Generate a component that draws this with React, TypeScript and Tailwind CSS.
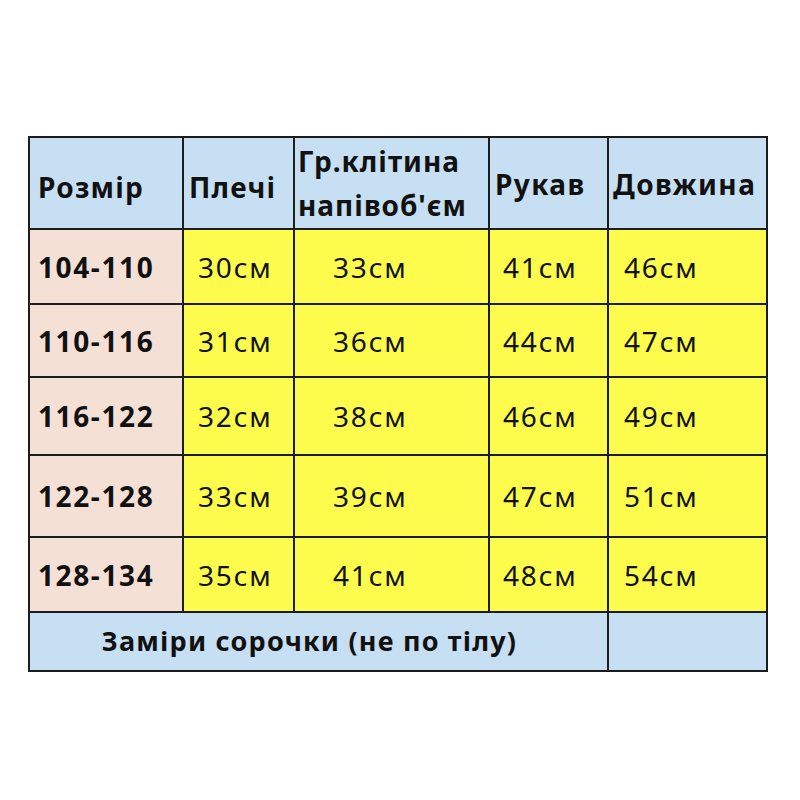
const rows = [
  { size: '104-110', h: 'h-[73px]', vals: ['30см', '33см', '41см', '46см'] },
  { size: '110-116', h: 'h-[71px]', vals: ['31см', '36см', '44см', '47см'] },
  { size: '116-122', h: 'h-[76px]', vals: ['32см', '38см', '46см', '49см'] },
  { size: '122-128', h: 'h-[80px]', vals: ['33см', '39см', '47см', '51см'] },
  { size: '128-134', h: 'h-[73px]', vals: ['35см', '41см', '48см', '54см'] },
];

// left padding of the value in each yellow column
const valuePad = ['pl-[14px]', 'pl-[38px]', 'pl-[13px]', 'pl-[15px]'];

export default function App() {
  return (
    <div
      className="w-[800px] h-[800px] bg-white pt-[136px] pl-[28px]"
      style={{ fontFamily: '"Noto Sans", "Open Sans", sans-serif' }}
    >
      <div className="inline-grid grid-cols-[152px_109px_193px_117px_157px] gap-[2px] p-[2px] bg-[#1c1c1c] text-[#111]">
        {/* Header */}
        <div className="h-[90px] bg-[#c6dff2] flex items-center pl-[8px] pt-[8px] text-[28px] font-bold tracking-[1.2px]">
          Розмір
        </div>
        <div className="h-[90px] bg-[#c6dff2] flex items-center pl-[5px] pt-[8px] text-[28px] font-bold tracking-[1.2px]">
          Плечі
        </div>
        <div className="h-[90px] bg-[#c6dff2] flex flex-col justify-center pl-[3px] text-[28px] font-bold leading-[44px] tracking-[1px]">
          <span>Гр.клітина</span>
          <span>напівоб'єм</span>
        </div>
        <div className="h-[90px] bg-[#c6dff2] flex items-center pl-[5px] pt-[2px] text-[28px] font-bold tracking-[1.4px]">
          Рукав
        </div>
        <div className="h-[90px] bg-[#c6dff2] flex items-center pl-[4px] pt-[2px] text-[28px] font-bold tracking-[1.4px]">
          Довжина
        </div>

        {/* Body */}
        {rows.map((row) => (
          <div key={row.size} className="contents">
            <div className={`${row.h} bg-[#f5e0d6] flex items-center pl-[8px] text-[28px] font-bold tracking-[1.6px]`}>
              {row.size}
            </div>
            {row.vals.map((v, i) => (
              <div
                key={i}
                className={`${row.h} bg-[#fdfb4c] flex items-center ${valuePad[i]} text-[28px] tracking-[1.8px]`}
              >
                {v}
              </div>
            ))}
          </div>
        ))}

        {/* Footer */}
        <div className="col-span-4 h-[57px] bg-[#c6dff2] flex items-center justify-center pr-[18px] text-[27px] font-bold tracking-[1.2px]">
          Заміри сорочки (не по тілу)
        </div>
        <div className="h-[57px] bg-[#c6dff2]" />
      </div>
    </div>
  );
}
